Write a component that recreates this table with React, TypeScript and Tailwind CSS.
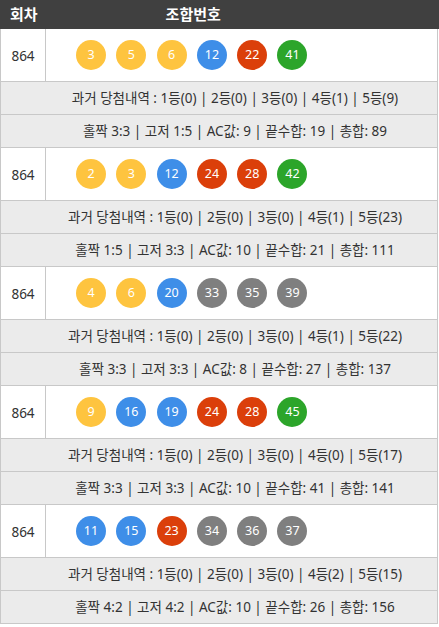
import React from 'react';

type Draw = {
  round: number;
  balls: number[];
  history: number[];
  stats: { oddEven: string; highLow: string; ac: number; endSum: number; total: number };
};

const draws: Draw[] = [
  { round: 864, balls: [3, 5, 6, 12, 22, 41], history: [0, 0, 0, 1, 9], stats: { oddEven: '3:3', highLow: '1:5', ac: 9, endSum: 19, total: 89 } },
  { round: 864, balls: [2, 3, 12, 24, 28, 42], history: [0, 0, 0, 1, 23], stats: { oddEven: '1:5', highLow: '3:3', ac: 10, endSum: 21, total: 111 } },
  { round: 864, balls: [4, 6, 20, 33, 35, 39], history: [0, 0, 0, 1, 22], stats: { oddEven: '3:3', highLow: '3:3', ac: 8, endSum: 27, total: 137 } },
  { round: 864, balls: [9, 16, 19, 24, 28, 45], history: [0, 0, 0, 0, 17], stats: { oddEven: '3:3', highLow: '3:3', ac: 10, endSum: 41, total: 141 } },
  { round: 864, balls: [11, 15, 23, 34, 36, 37], history: [0, 0, 0, 2, 15], stats: { oddEven: '4:2', highLow: '4:2', ac: 10, endSum: 26, total: 156 } },
];

function ballColor(n: number) {
  if (n <= 10) return 'bg-[#fec43f]';
  if (n <= 20) return 'bg-[#3e8ee8]';
  if (n <= 30) return 'bg-[#db3f0a]';
  if (n <= 40) return 'bg-[#7f7f7f]';
  return 'bg-[#2ca52a]';
}

function Ball({ n }: { n: number }) {
  return (
    <div
      className={`w-[30px] h-[30px] rounded-full flex items-center justify-center text-white text-[12.5px] ${ballColor(n)}`}
    >
      {n}
    </div>
  );
}

export default function App() {
  return (
    <div
      className="w-[439px] bg-white text-[#333]"
      style={{ fontFamily: '"Noto Sans", "Noto Sans CJK KR", sans-serif' }}
    >
      {/* Header */}
      <div className="h-[29px] bg-[#404040] flex items-center text-white font-bold text-[15px]">
        <span className="ml-[10px]">회차</span>
        <span className="ml-[128px]">조합번호</span>
      </div>

      {/* Rows */}
      <div className="border-x border-[#c8c8c8] mr-px">
        {draws.map((d, i) => (
          <div key={i}>
            <div className="h-[53px] flex border-b border-[#c8c8c8]">
              <div className="w-[45px] border-r border-[#c8c8c8] flex items-center justify-center pt-[2px] text-[13.5px]">
                {d.round}
              </div>
              <div className="flex items-center gap-[10.3px] pl-[30px]">
                {d.balls.map((b) => (
                  <Ball key={b} n={b} />
                ))}
              </div>
            </div>
            <div className="h-[33px] bg-[#ebebeb] border-b border-[#c8c8c8] flex items-center justify-center pl-[32px] text-[13.5px]">
              과거 당첨내역 : {d.history.map((h, k) => `${k + 1}등(${h})`).join(' | ')}
            </div>
            <div className="h-[33px] bg-[#ebebeb] border-b border-[#c8c8c8] flex items-center justify-center pl-[32px] text-[13.5px]">
              홀짝 {d.stats.oddEven} | 고저 {d.stats.highLow} | AC값: {d.stats.ac} | 끝수합: {d.stats.endSum} | 총합: {d.stats.total}
            </div>
          </div>
        ))}
      </div>
    </div>
  );
}
